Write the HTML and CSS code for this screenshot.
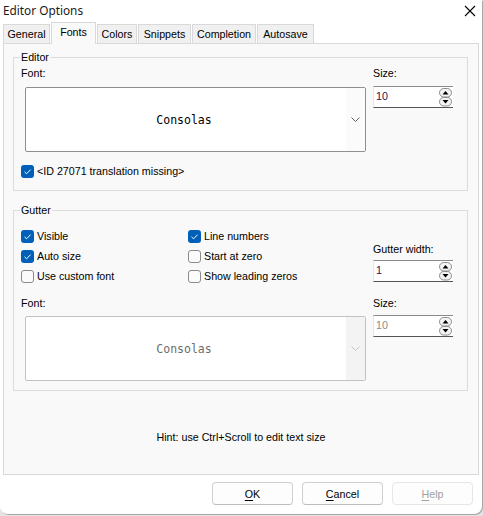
FILE: index.html
```html
<!DOCTYPE html>
<html>
<head>
<meta charset="utf-8">
<link rel="stylesheet" href="styles.css">
</head>
<body>
<div class="window">
  <div class="titlebar">
    <span class="title">Editor Options</span>
    <svg class="close" width="12" height="12" viewBox="0 0 12 12"><path d="M1 1 L11 11 M11 1 L1 11" stroke="#000" stroke-width="1.1" fill="none"/></svg>
  </div>
  <div class="tabs">
    <div class="tab t-general">General</div>
    <div class="tab t-fonts active">Fonts</div>
    <div class="tab t-colors">Colors</div>
    <div class="tab t-snippets">Snippets</div>
    <div class="tab t-completion">Completion</div>
    <div class="tab t-autosave">Autosave</div>
  </div>
  <div class="page">
    <fieldset class="group editor">
      <legend>Editor</legend>
      <div class="group-body">
        <div class="col-main">
          <div class="label">Font:</div>
          <div class="combo">
            <div class="combo-text">Consolas</div>
            <div class="combo-btn"><svg width="9" height="5" viewBox="0 0 9 5"><path d="M0.5 0.5 L4.5 4.5 L8.5 0.5" stroke="#606060" fill="none"/></svg></div>
          </div>
          <div class="check row-id"><span class="box on"><svg width="13" height="13" viewBox="0 0 13 13"><path d="M3.5 6.8 L5.6 8.8 L9.6 4.6" stroke="#fff" stroke-width="1" fill="none"/></svg></span>&lt;ID 27071 translation missing&gt;</div>
        </div>
        <div class="col-side">
          <div class="label">Size:</div>
          <div class="spin"><span class="val">10</span><svg class="arrows" width="13" height="19" viewBox="0 0 13 19"><rect x="0.5" y="0.5" width="12" height="8.5" rx="4.2" fill="#f3f3f3" stroke="#8c8c8c"/><path d="M3.5 6.5 L6.5 3 L9.5 6.5 Z" fill="#000"/><rect x="0.5" y="9.5" width="12" height="8.5" rx="4.2" fill="#f3f3f3" stroke="#8c8c8c"/><path d="M3.5 12 L9.5 12 L6.5 15.5 Z" fill="#000"/></svg></div>
        </div>
      </div>
    </fieldset>

    <fieldset class="group gutter">
      <legend>Gutter</legend>
      <div class="group-body">
        <div class="col-main">
          <div class="checks">
            <div class="check"><span class="box on"><svg width="13" height="13" viewBox="0 0 13 13"><path d="M3.5 6.8 L5.6 8.8 L9.6 4.6" stroke="#fff" stroke-width="1" fill="none"/></svg></span>Visible</div>
            <div class="check"><span class="box on"><svg width="13" height="13" viewBox="0 0 13 13"><path d="M3.5 6.8 L5.6 8.8 L9.6 4.6" stroke="#fff" stroke-width="1" fill="none"/></svg></span>Line numbers</div>
            <div class="check"><span class="box on"><svg width="13" height="13" viewBox="0 0 13 13"><path d="M3.5 6.8 L5.6 8.8 L9.6 4.6" stroke="#fff" stroke-width="1" fill="none"/></svg></span>Auto size</div>
            <div class="check"><span class="box"></span>Start at zero</div>
            <div class="check"><span class="box"></span>Use custom font</div>
            <div class="check"><span class="box"></span>Show leading zeros</div>
          </div>
          <div class="label font2">Font:</div>
          <div class="combo disabled">
            <div class="combo-text">Consolas</div>
            <div class="combo-btn"><svg width="9" height="5" viewBox="0 0 9 5"><path d="M0.5 0.5 L4.5 4.5 L8.5 0.5" stroke="#c4c4c4" fill="none"/></svg></div>
          </div>
        </div>
        <div class="col-side">
          <div class="label gw">Gutter width:</div>
          <div class="spin"><span class="val">1</span><svg class="arrows" width="13" height="19" viewBox="0 0 13 19"><rect x="0.5" y="0.5" width="12" height="8.5" rx="4.2" fill="#f3f3f3" stroke="#8c8c8c"/><path d="M3.5 6.5 L6.5 3 L9.5 6.5 Z" fill="#000"/><rect x="0.5" y="9.5" width="12" height="8.5" rx="4.2" fill="#f3f3f3" stroke="#8c8c8c"/><path d="M3.5 12 L9.5 12 L6.5 15.5 Z" fill="#000"/></svg></div>
          <div class="label sz2">Size:</div>
          <div class="spin disabled"><span class="val">10</span><svg class="arrows" width="13" height="19" viewBox="0 0 13 19"><rect x="0.5" y="0.5" width="12" height="8.5" rx="4.2" fill="#f3f3f3" stroke="#8c8c8c"/><path d="M3.5 6.5 L6.5 3 L9.5 6.5 Z" fill="#000"/><rect x="0.5" y="9.5" width="12" height="8.5" rx="4.2" fill="#f3f3f3" stroke="#8c8c8c"/><path d="M3.5 12 L9.5 12 L6.5 15.5 Z" fill="#000"/></svg></div>
        </div>
      </div>
    </fieldset>

    <div class="hint">Hint: use Ctrl+Scroll to edit text size</div>
  </div>
  <div class="buttons">
    <div class="btn"><u>O</u>K</div>
    <div class="btn"><u>C</u>ancel</div>
    <div class="btn disabled"><u>H</u>elp</div>
  </div>
</div>
</body>
</html>
```

FILE: styles.css
```css
* { box-sizing: border-box; }
html, body { margin: 0; padding: 0; }
body {
  width: 483px;
  height: 516px;
  background: #e4e4e4;
  font-family: "Liberation Sans", Arial, sans-serif;
  font-size: 10.7px;
  color: #000;
  overflow: hidden;
}
.window {
  width: 482px;
  height: 514px;
  background: #fff;
  border-radius: 0 0 8px 8px;
  box-shadow: 1px 1px 0 #a8a8a8;
  display: flex;
  flex-direction: column;
}
.titlebar {
  height: 22px;
  display: flex;
  align-items: center;
  justify-content: space-between;
  padding: 0 6px 3px 3px;
}
.title {
  font-family: "Noto Sans", sans-serif;
  font-size: 11.8px;
  color: #1a1a1a;
}
.close { display: block; margin-top: 2px; }
.tabs {
  height: 21px;
  display: flex;
  align-items: flex-end;
  padding-left: 3px;
  position: relative;
  z-index: 1;
}
.tab {
  height: 19px;
  background: #f0f0f0;
  border: 1px solid #d9d9d9;
  border-bottom: none;
  display: flex;
  align-items: center;
  justify-content: center;
  margin-right: 1px;
  white-space: nowrap;
}
.t-general { width: 47px; }
.t-fonts { width: 45px; }
.t-colors { width: 40px; }
.t-snippets { width: 53px; }
.t-completion { width: 64px; }
.t-autosave { width: 57px; }
.tab.active {
  height: 22px;
  margin-bottom: -1px;
  background: #f9f9f9;
  padding-bottom: 3px;
}
.page {
  margin: 0 3px;
  height: 432px;
  background: #f9f9f9;
  border: 1px solid #d9d9d9;
  padding: 7px 0 0 9px;
  display: flex;
  flex-direction: column;
}
.group {
  width: 455px;
  margin: 0;
  padding: 0;
  border: 1px solid #dcdcdc;
  min-width: 0;
}
.group legend {
  margin-left: 6px;
  padding: 0 1px;
  line-height: 13px;
  height: 13px;
}
.group-body {
  display: flex;
  padding: 3px 14px 0 7px;
}
.editor .group-body { height: 126px; }
.gutter { margin-top: 13px; }
.gutter .group-body { height: 173px; padding-top: 9px; }
.col-main {
  width: 345px;
  display: flex;
  flex-direction: column;
}
.col-side {
  margin-left: 7px;
  width: 80px;
  display: flex;
  flex-direction: column;
}
.label { line-height: 13px; height: 13px; }
.combo {
  margin-left: 4px;
  margin-top: 7px;
  height: 65px;
  background: #fff;
  border: 1px solid #8f8f8f;
  border-radius: 2px;
  display: flex;
}
.combo-text {
  flex: 1;
  display: flex;
  align-items: center;
  justify-content: center;
  font-family: "DejaVu Sans Mono", monospace;
  font-size: 11.5px;
  color: #000;
  padding: 1px 4px 0 0;
}
.combo-btn {
  width: 19px;
  background: #fbfbfb;
  display: flex;
  align-items: center;
  justify-content: center;
}
.combo.disabled { border-color: #c2c2c2; margin-top: 6px; }
.combo.disabled .combo-text { color: #6d6d6d; }
.combo.disabled .combo-btn { background: #f3f3f3; }
.check {
  display: flex;
  align-items: center;
  height: 20px;
  white-space: nowrap;
}
.row-id { margin-top: 9px; }
.box {
  width: 13px;
  height: 13px;
  border: 1px solid #8a8a8a;
  border-radius: 3px;
  background: #fbfbfb;
  margin-right: 3px;
  flex: none;
}
.box.on {
  border: none;
  background: #005fb8;
}
.box svg { display: block; }
.checks {
  display: grid;
  grid-template-columns: 167px 1fr;
}
.font2 { margin-top: 11px; }
.spin {
  margin-top: 6px;
  height: 22px;
  background: #fff;
  border-top: 1px solid #8a8a8a;
  border-bottom: 1px solid #555;
  border-left: 1px solid #e6e6e6;
  display: flex;
  justify-content: space-between;
  padding: 3px 1px 0 2px;
}
.val { color: #3c0a46; line-height: 13px; }
.arrows { display: block; margin-top: -2px; }
.spin.disabled .val { color: #8a8a8a; }
.gw { margin-top: 17px; }
.gw + .spin { margin-top: 4px; }
.sz2 { margin-top: 15px; }
.sz2 + .spin { margin-top: 5px; }
.hint {
  margin-top: 40px;
  text-align: center;
  line-height: 13px;
  padding-right: 9px;
}
.buttons {
  display: flex;
  justify-content: flex-end;
  gap: 9px;
  padding: 7px 9px 0 0;
}
.btn {
  width: 81px;
  height: 23px;
  border: 1px solid #d0d0d0;
  border-bottom-color: #bcbcbc;
  border-radius: 4px;
  background: #fdfdfd;
  display: flex;
  align-items: center;
  justify-content: center;
}
.btn u { text-decoration: underline; text-underline-offset: 2px; }
.btn.disabled { color: #a0a0a0; border-color: #e6e6e6; }
```
